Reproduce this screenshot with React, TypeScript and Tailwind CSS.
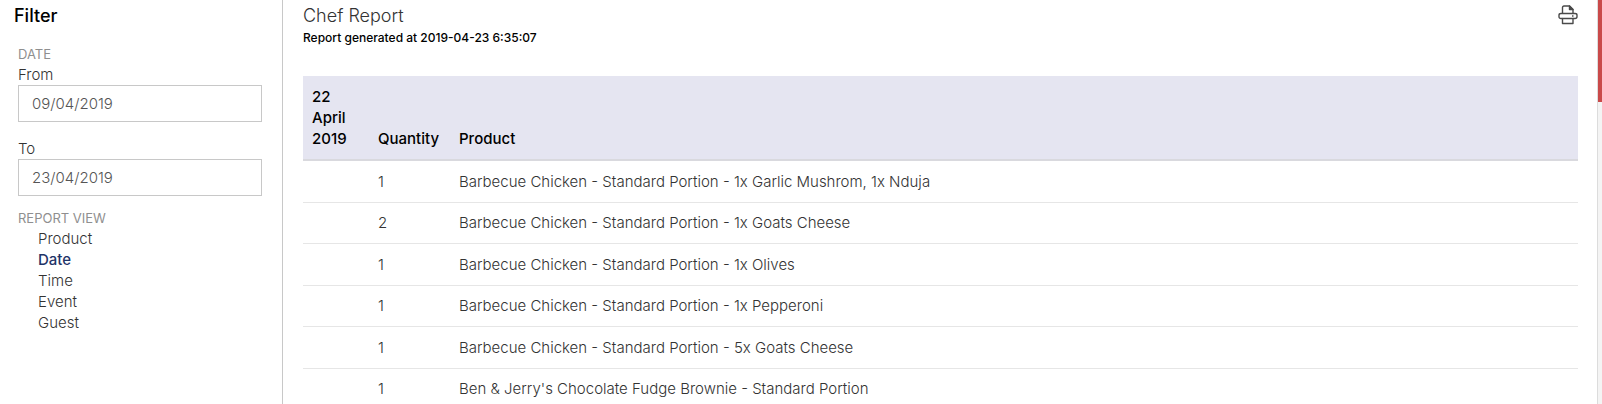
import { useState } from "react";

interface Row {
  quantity: number;
  product:  string;
}

const rows: Row[] = [
  { quantity: 1, product: "Barbecue Chicken - Standard Portion - 1x Garlic Mushrom, 1x Nduja" },
  { quantity: 2, product: "Barbecue Chicken - Standard Portion - 1x Goats Cheese" },
  { quantity: 1, product: "Barbecue Chicken - Standard Portion - 1x Olives" },
  { quantity: 1, product: "Barbecue Chicken - Standard Portion - 1x Pepperoni" },
  { quantity: 1, product: "Barbecue Chicken - Standard Portion - 5x Goats Cheese" },
  { quantity: 1, product: "Ben & Jerry's Chocolate Fudge Brownie - Standard Portion" },
];

const views = ["Product", "Date", "Time", "Event", "Guest"];

interface DateFieldProps {
  id:       string;
  label:    string;
  value:    string;
  onChange: (value: string) => void;
}

function DateField({ id, label, value, onChange }: DateFieldProps) {
  return (
    <div>
      <label htmlFor={id} className="block">{label}</label>
      <input
        id={id}
        type="text"
        value={value}
        onChange={(e) => onChange(e.target.value)}
        className="block w-full h-[37px] px-[13px] border border-[#c8c8c8] bg-white text-[#555] outline-none"
      />
    </div>
  );
}

function PrintIcon() {
  return (
    <svg width="20" height="20" viewBox="0 0 20 20" fill="none" stroke="#4a4a4a" strokeWidth="1.4" strokeLinejoin="round">
      <path d="M4.5 8.5V2.5Q4.5 1 6 1H11.5L15 4.5V8.5" />
      <path d="M11.5 1V4.5H15Z" fill="#4a4a4a" />
      <path d="M4.5 13.5H3Q1 13.5 1 11.8V10.2Q1 8.5 3 8.5H17Q19 8.5 19 10.2V11.8Q19 13.5 17 13.5H15" />
      <path d="M4.5 13.5H15V18.5H4.5Z" />
      <path d="M14 11H15.5" />
    </svg>
  );
}

function Sidebar() {
  const [from, setFrom] = useState("09/04/2019");
  const [to, setTo]     = useState("23/04/2019");
  const [view, setView] = useState("Date");

  return (
    <aside className="w-[283px] shrink-0 border-r border-[#c8c8c8] pt-1 pl-[14px] pr-5">
      <h2 className="text-lg leading-6 font-medium text-black">Filter</h2>

      <div className="pl-1 mt-4">
        <h3 className="text-[13px] leading-5 font-normal text-[#8f8f8f]">DATE</h3>
        <div className="flex flex-col gap-4">
          <DateField id="from" label="From" value={from} onChange={setFrom} />
          <DateField id="to" label="To" value={to} onChange={setTo} />
        </div>

        <h3 className="mt-3 text-[13px] leading-5 font-normal text-[#8f8f8f]">REPORT VIEW</h3>
        <ul className="pl-5">
          {views.map((v) => (
            <li key={v}>
              <button
                type="button"
                onClick={() => setView(v)}
                className={v === view ? "block font-medium text-[#1f3468]" : "block"}
              >
                {v}
              </button>
            </li>
          ))}
        </ul>
      </div>
    </aside>
  );
}

export default function App() {
  return (
    <div className="flex h-screen overflow-hidden bg-white font-['Inter','Liberation_Sans',sans-serif] text-[15px] leading-[21px] font-light text-[#333]">
      <Sidebar />

      <main className="flex-1 min-w-0 overflow-hidden pt-1 pl-5 pr-[19px]">
        <header className="flex items-start justify-between">
          <div>
            <h1 className="text-lg leading-6">Chef Report</h1>
            <p className="text-xs leading-5 font-medium text-black">Report generated at 2019-04-23 6:35:07</p>
          </div>
          <button type="button" aria-label="Print" className="mt-[1px]">
            <PrintIcon />
          </button>
        </header>

        <table className="mt-7 w-full table-fixed border-separate border-spacing-0 text-left">
          <thead>
            <tr className="bg-[#e5e5f1] align-bottom text-black">
              <th className="w-[66px] px-[9px] py-[10px] border-b-2 border-[#d9d9de] font-medium">22 April 2019</th>
              <th className="w-[81px] px-[9px] py-[10px] border-b-2 border-[#d9d9de] font-medium">Quantity</th>
              <th className="px-[9px] py-[10px] border-b-2 border-[#d9d9de] font-medium">Product</th>
            </tr>
          </thead>
          <tbody>
            {rows.map((row) => (
              <tr key={row.product} className="even:leading-5">
                <td className="border-b border-[#e6e6e6]" />
                <td className="px-[9px] py-[10px] border-b border-[#e6e6e6]">{row.quantity}</td>
                <td className="px-[9px] py-[10px] border-b border-[#e6e6e6]">{row.product}</td>
              </tr>
            ))}
          </tbody>
        </table>
      </main>

      {/* Scroll track */}
      <div className="w-[5px] shrink-0 border-l border-[#dcdcdc] bg-[#f4f4f4]">
        <div className="h-[102px] bg-[#c94a4a]" />
      </div>
    </div>
  );
}
